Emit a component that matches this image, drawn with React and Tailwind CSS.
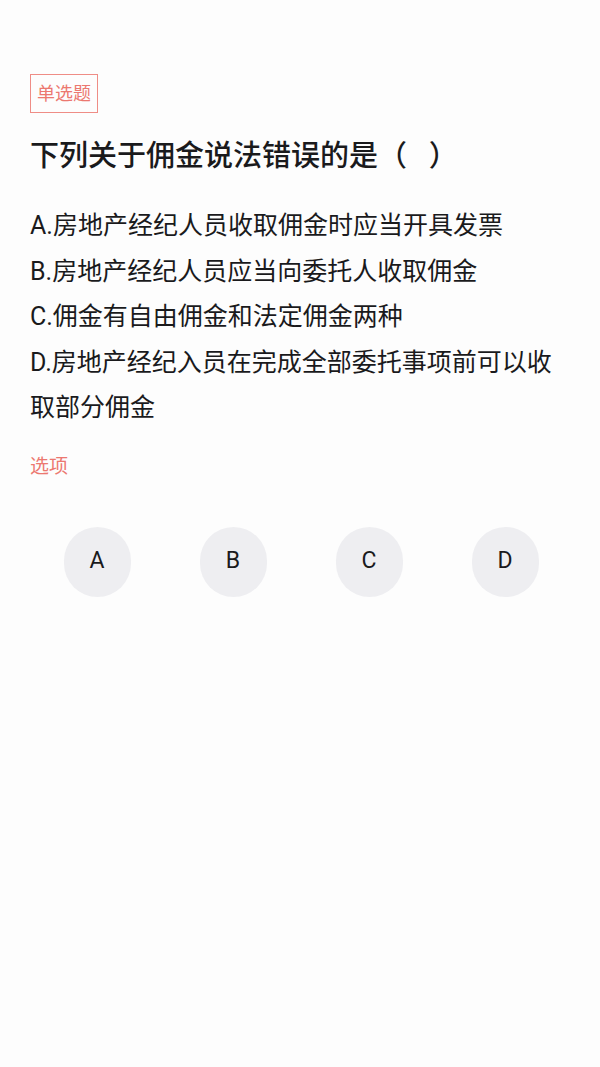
import React from "react";

const options = [
  "A.房地产经纪人员收取佣金时应当开具发票",
  "B.房地产经纪人员应当向委托人收取佣金",
  "C.佣金有自由佣金和法定佣金两种",
  "D.房地产经纪入员在完成全部委托事项前可以收取部分佣金",
];

export default function App() {
  return (
    <div
      className="min-h-[1067px] w-full bg-[#fdfdfd] px-[30px] pt-[74px] text-[#1a1a1c]"
      style={{ fontFamily: 'Roboto, "Noto Sans CJK SC", "Noto Sans", sans-serif' }}
    >
      <div className="inline-flex h-[39px] items-center border border-[#ef8d86] px-[6px] text-[18px] text-[#ec7870]">
        单选题
      </div>
      <h1 className="mt-[23px] text-[29px] font-medium leading-[40px]">
        下列关于佣金说法错误的是（{"\u00a0\u00a0\u00a0"}）
      </h1>
      <div className="mt-[27px] text-[25px] leading-[45.5px]">
        {options.map((o) => (
          <p key={o}>{o}</p>
        ))}
      </div>
      <div className="mt-[23px] text-[19px] leading-[26px] text-[#ec7870]">选项</div>
      <div className="-ml-px mt-[47px] grid w-[544px] grid-cols-4 justify-items-center">
        {["A", "B", "C", "D"].map((l) => (
          <button
            key={l}
            className="flex h-[70px] w-[67px] items-center justify-center rounded-full bg-[#eeeef1] text-[23px] text-[#1a1a1c]"
          >
            {l}
          </button>
        ))}
      </div>
    </div>
  );
}
